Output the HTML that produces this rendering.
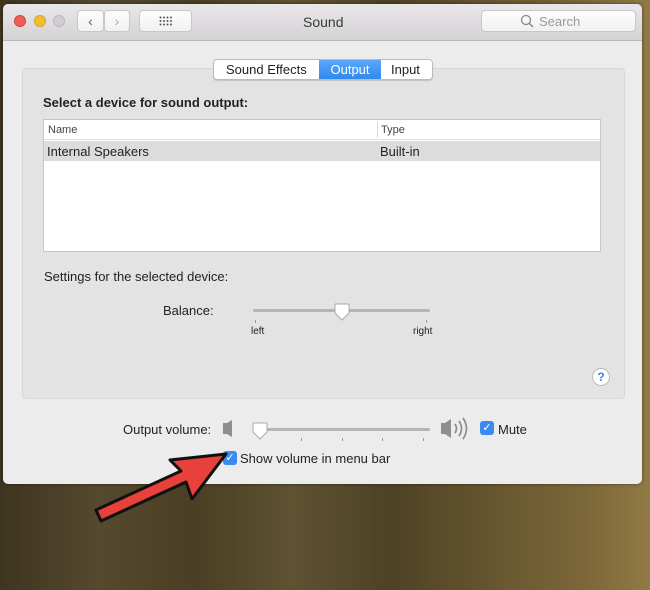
<!DOCTYPE html>
<html><head><meta charset="utf-8"><style>
*{margin:0;padding:0;box-sizing:border-box}
body{width:650px;height:590px;overflow:hidden;position:relative;font-family:"Liberation Sans",sans-serif;
background:linear-gradient(90deg,#3e3520 0%,#55492e 15%,#4a3f24 30%,#5f5233 45%,#4e4226 60%,#65552f 75%,#7c6738 90%,#917a45 100%);}
.win{position:absolute;left:3px;top:4px;width:639px;height:480px;background:#ececec;border-radius:5px;overflow:hidden;box-shadow:0 0 3px rgba(0,0,0,.5)}
.tb{position:absolute;left:0;top:0;width:100%;height:37px;background:linear-gradient(#e9e7e9,#d4d2d4);border-bottom:1px solid #b9b7b9}
.dot{position:absolute;top:11px;width:12px;height:12px;border-radius:50%}
.btn{position:absolute;top:6px;height:22px;background:linear-gradient(#fdfdfd,#f1f1f1);border:1px solid #c8c6c8;border-radius:4px;color:#666;font-size:14px;text-align:center;line-height:20px}
.t{position:absolute;color:#222;font-size:13px;white-space:nowrap}
</style></head><body>
<div class="win">
 <div class="tb">
  <div class="dot" style="left:11px;background:#ec5e57;border:1px solid #d5483f"></div>
  <div class="dot" style="left:31px;background:#f3be33;border:1px solid #d9a21f"></div>
  <div class="dot" style="left:50px;background:#cfcdcf;border:1px solid #bab8ba"></div>
  <div class="btn" style="left:74px;width:27px">&#8249;</div>
  <div class="btn" style="left:101px;width:26px;color:#aaa">&#8250;</div>
  <div class="btn" style="left:136px;width:53px">
   <svg width="14" height="10" style="position:absolute;left:19px;top:5px"><g fill="#555"><circle cx="1.5" cy="1.5" r="1"/><circle cx="5" cy="1.5" r="1"/><circle cx="8.5" cy="1.5" r="1"/><circle cx="12" cy="1.5" r="1"/><circle cx="1.5" cy="5" r="1"/><circle cx="5" cy="5" r="1"/><circle cx="8.5" cy="5" r="1"/><circle cx="12" cy="5" r="1"/><circle cx="1.5" cy="8.5" r="1"/><circle cx="5" cy="8.5" r="1"/><circle cx="8.5" cy="8.5" r="1"/><circle cx="12" cy="8.5" r="1"/></g></svg></div>
  <div class="t" style="left:300px;top:10px;font-size:14px;color:#3a3a3a">Sound</div>
  <div class="btn" style="left:478px;width:155px;color:#999;font-size:13px">
   <svg width="14" height="14" style="position:absolute;left:38px;top:3px" viewBox="0 0 14 14"><circle cx="6" cy="6" r="4.5" fill="none" stroke="#888" stroke-width="1.3"/><path d="M9.3 9.3L13 13" stroke="#888" stroke-width="1.5"/></svg>
   <span style="position:absolute;left:57px;top:1px">Search</span></div>
 </div>
 <div style="position:absolute;left:19px;top:64px;width:603px;height:331px;background:#e3e3e3;border:1px solid #d8d8d8;border-radius:4px"></div>
 <div style="position:absolute;left:210px;top:55px;width:220px;height:21px;background:#fff;border:1px solid #bcbcbc;border-radius:4px;box-shadow:0 1px 1px rgba(0,0,0,.15);overflow:hidden;font-size:13px">
  <span style="position:absolute;left:12px;top:2px;color:#222">Sound Effects</span>
  <div style="position:absolute;left:105px;top:0;width:62px;height:21px;background:linear-gradient(#5aa7f7,#2b86ee);color:#fff;text-align:center;line-height:19px">Output</div>
  <span style="position:absolute;left:177px;top:2px;color:#222">Input</span>
 </div>
 <div class="t" style="left:40px;top:91px;font-weight:bold;font-size:13px">Select a device for sound output:</div>
 <div style="position:absolute;left:40px;top:115px;width:558px;height:133px;background:#fff;border:1px solid #c6c6c6">
  <div style="position:absolute;left:0;top:0;width:100%;height:20px;border-bottom:1px solid #e0e0e0"></div>
  <div style="position:absolute;left:333px;top:2px;width:1px;height:16px;background:#ddd"></div>
  <span class="t" style="left:4px;top:4px;font-size:11px;color:#444">Name</span>
  <span class="t" style="left:337px;top:4px;font-size:11px;color:#444">Type</span>
  <div style="position:absolute;left:0;top:21px;width:100%;height:20px;background:#dcdcdc"></div>
  <span class="t" style="left:3px;top:24px">Internal Speakers</span>
  <span class="t" style="left:336px;top:24px">Built-in</span>
 </div>
 <div class="t" style="left:41px;top:265px">Settings for the selected device:</div>
 <div class="t" style="left:160px;top:299px">Balance:</div>
 <div style="position:absolute;left:250px;top:305px;width:177px;height:3px;background:#b5b5b5;border-radius:2px"></div>
 <div style="position:absolute;left:252px;top:316px;width:1px;height:3px;background:#999"></div>
 <div style="position:absolute;left:423px;top:316px;width:1px;height:3px;background:#999"></div>
 <svg style="position:absolute;left:330px;top:299px" width="18" height="20"><path d="M2 1H15a1 1 0 0 1 1 1V10L9 17L2 10V2a1 1 0 0 1 1-1Z" fill="#fff" stroke="#aaa"/></svg>
 <div class="t" style="left:248px;top:322px;font-size:10px">left</div>
 <div class="t" style="left:410px;top:322px;font-size:10px">right</div>
 <div style="position:absolute;left:589px;top:364px;width:18px;height:18px;border-radius:50%;background:#fff;border:1px solid #bbb;color:#3a85e0;font-size:12px;font-weight:bold;text-align:center;line-height:16px">?</div>
 <div class="t" style="left:120px;top:418px">Output volume:</div>
 <svg style="position:absolute;left:218px;top:413px" width="16" height="22"><path d="M2 6H6V17H2Z M6 6L11 3V20L6 17Z" fill="#8e8e8e"/></svg>
 <div style="position:absolute;left:252px;top:424px;width:175px;height:3px;background:#b5b5b5;border-radius:2px"></div>
 <div style="position:absolute;left:298px;top:434px;width:1px;height:3px;background:#999"></div>
 <div style="position:absolute;left:339px;top:434px;width:1px;height:3px;background:#999"></div>
 <div style="position:absolute;left:379px;top:434px;width:1px;height:3px;background:#999"></div>
 <div style="position:absolute;left:420px;top:434px;width:1px;height:3px;background:#999"></div>
 <svg style="position:absolute;left:248px;top:418px" width="18" height="20"><path d="M2 1H15a1 1 0 0 1 1 1V10L9 17L2 10V2a1 1 0 0 1 1-1Z" fill="#fff" stroke="#aaa"/></svg>
 <svg style="position:absolute;left:436px;top:412px" width="34" height="26"><path d="M2 7H6V18H2Z M6 7L12 3V22L6 18Z" fill="#8e8e8e"/><path d="M16 8Q19 12.5 16 17M20 5Q25 12.5 20 20M24 2Q31 12.5 24 23" fill="none" stroke="#888" stroke-width="1.6"/></svg>
 <div style="position:absolute;left:477px;top:417px;width:14px;height:14px;border-radius:3px;background:#3b8cf0;color:#fff;font-size:11px;text-align:center;line-height:14px">✓</div>
 <div class="t" style="left:495px;top:418px">Mute</div>
 <div style="position:absolute;left:220px;top:447px;width:14px;height:14px;border-radius:3px;background:#3b8cf0;color:#fff;font-size:11px;text-align:center;line-height:14px">✓</div>
 <div class="t" style="left:237px;top:447px">Show volume in menu bar</div>
</div>
<svg style="position:absolute;left:0;top:0" width="650" height="590"><path d="M226 454L170 460L181 471L96 510L101 521L186 482L192 499Z" fill="#e8403a" stroke="#111" stroke-width="3" stroke-linejoin="round"/></svg>
</body></html>
